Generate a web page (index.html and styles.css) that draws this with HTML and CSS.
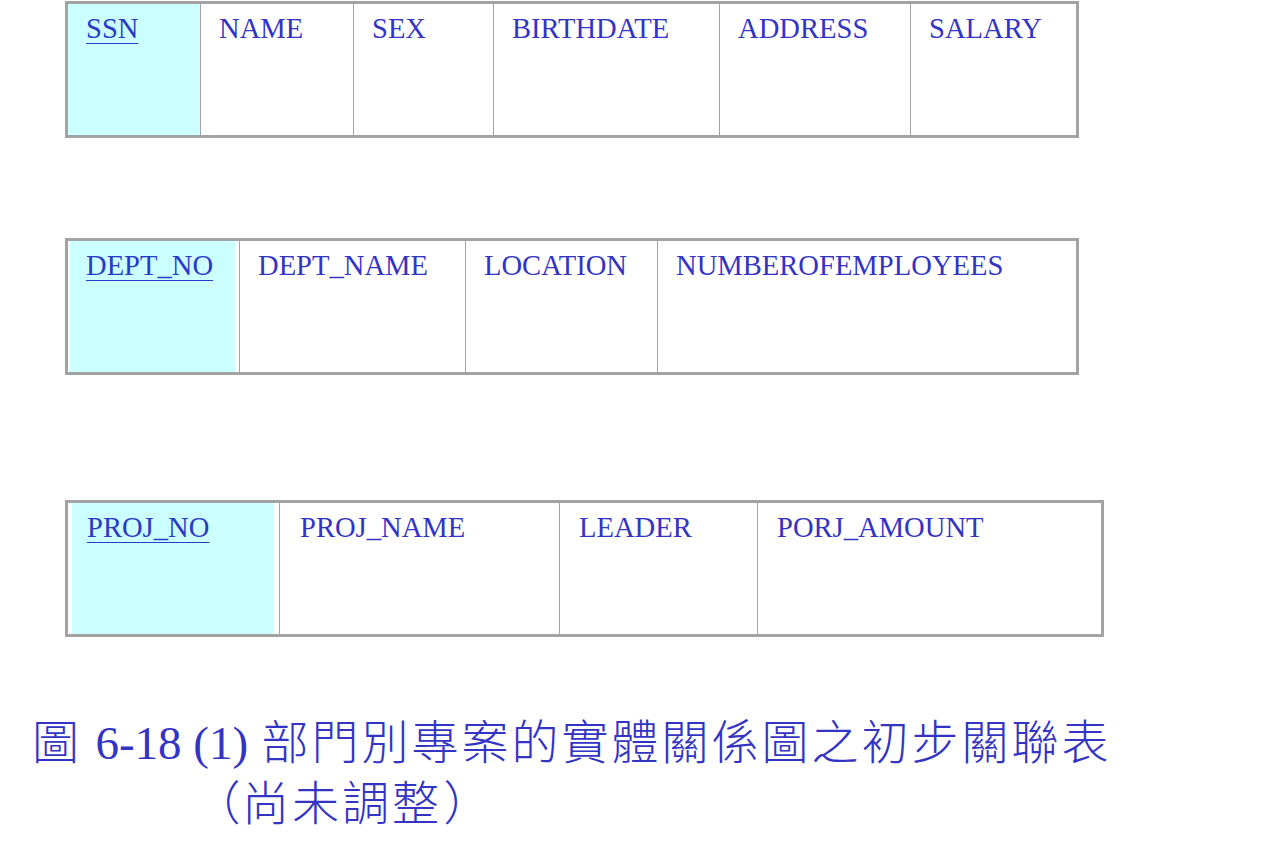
FILE: index.html
```html
<!DOCTYPE html>
<html lang="zh-Hant">
<head>
<meta charset="utf-8">
<title>部門別專案的實體關係圖之初步關聯表</title>
<link rel="stylesheet" href="styles.css">
</head>
<body>
<main class="page">
  <div class="rel rel-emp">
    <div class="cell key w132"><span class="fill"><u>SSN</u></span></div>
    <div class="cell w152">NAME</div>
    <div class="cell w139">SEX</div>
    <div class="cell w225">BIRTHDATE</div>
    <div class="cell w190">ADDRESS</div>
    <div class="cell grow">SALARY</div>
  </div>

  <div class="rel rel-dept">
    <div class="cell key inset-dept w171"><span class="fill"><u>DEPT_NO</u></span></div>
    <div class="cell w225">DEPT_NAME</div>
    <div class="cell w191">LOCATION</div>
    <div class="cell grow">NUMBEROFEMPLOYEES</div>
  </div>

  <div class="rel rel-proj">
    <div class="cell key inset-proj w211"><span class="fill"><u>PROJ_NO</u></span></div>
    <div class="cell w279 pad20">PROJ_NAME</div>
    <div class="cell w197 pad19">LEADER</div>
    <div class="cell grow pad19">PORJ_AMOUNT</div>
  </div>

  <div class="caption">
    <div class="cap-line">圖 <span class="latin">6-18 (1)</span> 部門別專案的實體關係圖之初步關聯表</div>
    <div class="cap-line cap-second"><span class="paren">（</span>尚未調整<span class="paren">）</span></div>
  </div>
</main>
</body>
</html>
```

FILE: styles.css
```css
html, body {
  margin: 0;
  padding: 0;
  background: #ffffff;
}

.page {
  padding-top: 1px;
  font-family: "Liberation Serif", "Noto Sans CJK TC", serif;
  color: #3434c4;
}

.rel {
  display: flex;
  box-sizing: border-box;
  margin-left: 65px;
  width: 1014px;
  height: 137px;
  border: 3px solid #a3a3a3;
}

.rel-dept {
  margin-top: 100px;
}

.rel-proj {
  margin-top: 125px;
  width: 1039px;
}

.cell {
  box-sizing: border-box;
  flex: none;
  position: relative;
  padding: 9px 0 0 18px;
  font-size: 28.6px;
  line-height: 32px;
  white-space: nowrap;
  border-left: 1px solid #a3a3a3;
}

.cell:first-child {
  border-left: none;
}

.grow {
  flex: 1 1 auto;
}

.pad19 { padding-left: 19px; }
.pad20 { padding-left: 20px; }

.w132 { width: 132px; }
.w152 { width: 153px; }
.w139 { width: 140px; }
.w225 { width: 226px; }
.w190 { width: 191px; }
.w171 { width: 171px; }
.w191 { width: 192px; }
.w211 { width: 211px; }
.w279 { width: 280px; }
.w197 { width: 198px; }

.key {
  display: flex;
  padding: 0;
}

.key .fill {
  flex: 1 1 auto;
  background: #ccffff;
  padding: 9px 0 0 18px;
  color: #2a3ac8;
}

.inset-dept {
  padding: 0 4px 0 2px;
}

.inset-dept .fill {
  padding-left: 16px;
}

.inset-proj {
  padding: 0 5px 0 4px;
}

.inset-proj .fill {
  padding-left: 15px;
}

.key u {
  text-decoration-thickness: 1px;
  text-underline-offset: 5px;
}

.caption {
  margin-top: 71px;
  padding-left: 32px;
  font-family: "Noto Sans CJK TC", sans-serif;
  font-weight: 300;
  font-size: 47px;
  letter-spacing: 3px;
  line-height: 61px;
  color: #3434c4;
}

.latin {
  font-family: "Liberation Serif", serif;
  font-weight: 400;
  font-size: 47px;
  letter-spacing: 0;
  line-height: 40px;
}

.cap-line {
  white-space: nowrap;
}

.cap-second {
  padding-left: 160px;
}

.paren {
  display: inline-block;
  width: 50px;
  letter-spacing: 0;
  text-align: center;
}
```
